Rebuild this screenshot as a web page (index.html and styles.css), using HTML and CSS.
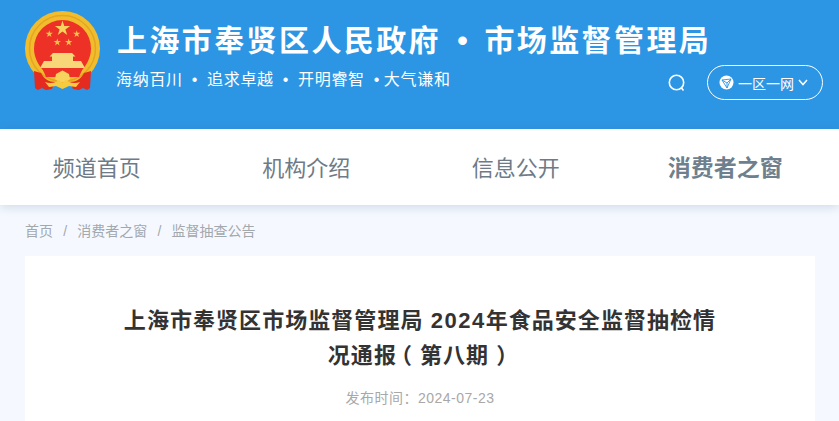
FILE: index.html
```html
<!DOCTYPE html>
<html lang="zh-CN">
<head>
    <meta charset="UTF-8">
    <meta name="viewport" content="width=device-width, initial-scale=1.0">
    <title>上海市奉贤区市场监督管理局 2024年食品安全监督抽检情况通报（第八期）</title>
    <link rel="stylesheet" href="styles.css">
</head>
<body>
    <header class="site-header">
        <svg class="emblem" width="76" height="80" viewBox="0 0 76 80">
            <defs>
                <polygon id="star" points="0,-10 2.2,-3.1 9.5,-3.1 3.6,1.2 5.900,8.100 0,3.800 -5.900,8.100 -3.600,1.200 -9.500,-3.100 -2.200,-3.100" />
            </defs>
            <circle cx="37.500" cy="37.500" r="37.500" fill="#f2bd2c" />
            <circle cx="37.500" cy="37.500" r="33" fill="none" stroke="#e3a522" stroke-width="1.500" />
            <path d="M37.500 9 A28.500 28.500 0 0 1 66 37.500 C66 46 62 54 56 60 L19 60 C13 54 9 46 9 37.500 A28.500 28.500 0 0 1 37.500 9 Z" fill="#ee3126" />
            <use href="#star" transform="translate(37.500 17.500) scale(0.8)" fill="#f7d25c" />
            <use href="#star" transform="translate(24.300 23) scale(0.38)" fill="#f0c44a" />
            <use href="#star" transform="translate(51.700 23) scale(0.38)" fill="#f0c44a" />
            <use href="#star" transform="translate(32.300 31.300) scale(0.38)" fill="#f0c44a" />
            <use href="#star" transform="translate(43.700 31.300) scale(0.38)" fill="#f0c44a" />
            <path d="M28 42 L47 42 L50.500 45.500 L48 45.500 L48 50 L56 50 L60 57 L15 57 L19 50 L27 50 L27 45.500 L24.500 45.500 Z" fill="#f8d779" />
            <path d="M17 57 L58 57 L54 66 L21 66 Z" fill="#ee3126" />
            <path d="M9 60 L16 62 C19 68 24 71 30 71 L27 78 L21 79 L17 77 L13 79 L10 77 Z" fill="#e52a1f" />
            <path d="M66 60 L59 62 C56 68 51 71 45 71 L48 78 L54 79 L58 77 L62 79 L65 77 Z" fill="#e52a1f" />
            <path d="M30 68 L31 63 L37.500 59.500 L44 63 L45 68 L41 71 L34 71 Z" fill="#f7d25c" />
            <path d="M20 71 C25 73 31 72 34 69 L37.500 72 L41 69 C44 72 50 73 55 71 L51 76 L44 75 L37.500 78 L31 75 L24 76 Z" fill="#f5cb3f" />
        </svg>
        <div class="brand">
            <div class="site-name">上海市奉贤区人民政府 <span class="dot">•</span> 市场监督管理局</div>
            <div class="motto">海纳百川 <span class="dot">•</span> 追求卓越 <span class="dot">•</span> 开明睿智 <span class="dot">•</span>大气谦和</div>
        </div>
        <div class="tools">
            <svg class="search" width="20" height="20" viewBox="0 0 20 20" fill="none" stroke="#fff" stroke-width="1.600">
                <circle cx="9.500" cy="9.500" r="7.200" />
                <path d="M14.500 15 L16.500 17.500" />
            </svg>
            <div class="region-btn">
                <svg width="15" height="15" viewBox="0 0 15 15">
                    <circle cx="7.500" cy="7.500" r="7" fill="#fff" />
                    <path d="M3 5 L12 4 L8 13 Z M3 5 L8 8 L12 4 M8 8 L8 13" fill="none" stroke="#2d96e4" stroke-width="0.900" />
                </svg>
                <span>一区一网</span>
                <svg width="10" height="7" viewBox="0 0 10 7" fill="none" stroke="#fff" stroke-width="1.500">
                    <path d="M1 1 L5 5.500 L9 1" />
                </svg>
            </div>
        </div>
    </header>

    <nav class="main-nav">
        <a href="#">频道首页</a>
        <a href="#">机构介绍</a>
        <a href="#">信息公开</a>
        <a href="#" class="active">消费者之窗</a>
    </nav>

    <div class="crumbs">
        <a href="#">首页</a>
        <i>/</i>
        <a href="#">消费者之窗</a>
        <i>/</i>
        <a href="#">监督抽查公告</a>
    </div>

    <main class="article">
        <h1>上海市奉贤区市场监督管理局 <span class="num">2024</span>年食品安全监督抽检情<br>况通报<span class="open">（</span>第八期<span class="close">）</span></h1>
        <p class="pub-date">发布时间：2024-07-23</p>
    </main>
</body>
</html>
```

FILE: styles.css
```css
html, body {
    height: 421px;
    overflow: hidden;
}

body {
    margin: 0;
    background: #f5f9ff;
    font-family: "Liberation Sans", "Noto Sans CJK SC", sans-serif;
}

a {
    color: inherit;
    text-decoration: none;
}

.site-header {
    height: 129px;
    box-sizing: border-box;
    padding: 11px 16px 0 25px;
    background: #2d96e4;
    color: #fff;
    display: flex;
    align-items: flex-start;
}

.emblem {
    flex: none;
}

.brand {
    margin-left: 16px;
    flex: 1;
    min-width: 0;
}

.site-name {
    margin-top: 9px;
    font-size: 30px;
    line-height: 42px;
    font-weight: 700;
    letter-spacing: 2.4px;
    white-space: nowrap;
}

.site-name .dot {
    margin: 0 3.5px 0 5.5px;
}

.motto {
    margin-top: 7px;
    margin-left: -1px;
    font-size: 16px;
    line-height: 22px;
    letter-spacing: 0.7px;
    white-space: nowrap;
}

.motto .dot {
    margin: 0 3.8px;
}

.tools {
    flex: none;
    margin-top: 54px;
    display: flex;
    align-items: center;
}

.search {
    margin-right: 20px;
}

.region-btn {
    width: 116px;
    height: 35px;
    box-sizing: border-box;
    border: 1px solid #fff;
    border-radius: 18px;
    padding-left: 11px;
    display: flex;
    align-items: center;
    gap: 4px;
    font-size: 14px;
}

.main-nav {
    position: relative;
    height: 76px;
    box-sizing: border-box;
    padding-bottom: 2px;
    background: #fff;
    box-shadow: 0 2px 10px rgba(60, 90, 130, 0.2);
    display: grid;
    grid-template-columns: repeat(4, 209.5px);
    align-items: center;
    text-indent: -16px;
    text-align: center;
    font-size: 22px;
    color: #6e7b87;
}

.main-nav .active {
    font-weight: 700;
    font-size: 23px;
    color: #6e7f8e;
}

.crumbs {
    height: 51px;
    box-sizing: border-box;
    padding: 16px 0 0 25px;
    display: flex;
    gap: 10.2px;
    font-size: 14px;
    line-height: 20px;
    color: #a3a8ad;
}

.crumbs i {
    font-style: normal;
}

.article {
    margin: 0 24px 0 25px;
    height: 165px;
    box-sizing: border-box;
    padding: 47px 90px 0;
    background: #fff;
    text-align: center;
}

.article h1 {
    margin: 0;
    font-size: 22px;
    line-height: 35px;
    font-weight: 700;
    letter-spacing: 1.05px;
    color: #333;
}

.num {
    letter-spacing: 1.5px;
}

.open,
.close {
    font-feature-settings: "halt";
}

.open {
    margin: 0 7px 0 4px;
}

.close {
    margin: 0 4px 0 7px;
}

.pub-date {
    margin: 14px 0 0;
    font-size: 14px;
    line-height: 22px;
    letter-spacing: 0.5px;
    color: #a8a8a8;
}
```
